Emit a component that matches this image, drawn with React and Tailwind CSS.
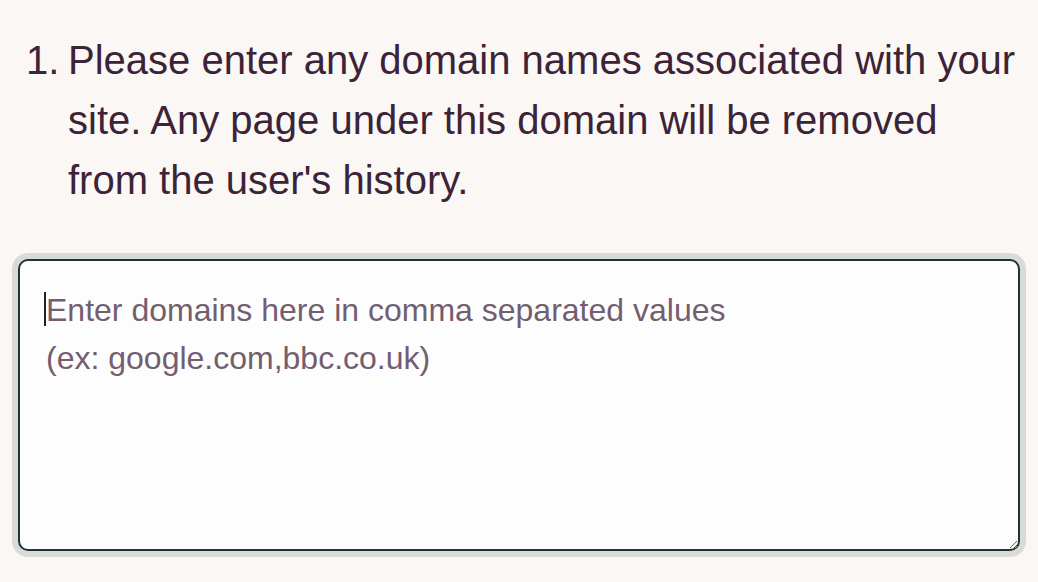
export default function App() {
  return (
    <div
      className="w-[1038px] h-[582px] bg-[#fbf7f4] overflow-hidden"
      style={{ fontFamily: '"Liberation Sans", Arial, sans-serif' }}
    >
      <ol className="pt-[30px] pl-[26px] pr-[10px]">
        <li className="flex text-[40px] leading-[60px] text-[#3b2338]">
          <span className="w-[42px] shrink-0">1.</span>
          <span>
            Please enter any domain names associated with your site. Any page
            under this domain will be removed from the user's history.
          </span>
        </li>
      </ol>

      <div className="mt-[49px] mx-[18px] relative">
        <textarea
          className="block w-full h-[292px] rounded-[10px] border-2 border-[#213336] bg-[#fefdfd] px-[26px] pt-[25px] text-[32px] leading-[48px] text-[#3b2338] placeholder:text-[#735e70] outline-none resize-y"
          style={{ boxShadow: "0 0 0 6px #d9dbd6" }}
          placeholder={"Enter domains here in comma separated values\n(ex: google.com,bbc.co.uk)"}
        />
        <div className="absolute left-[26px] top-[33px] w-[2px] h-[34px] bg-[#2a1d28]" />
      </div>
    </div>
  );
}
